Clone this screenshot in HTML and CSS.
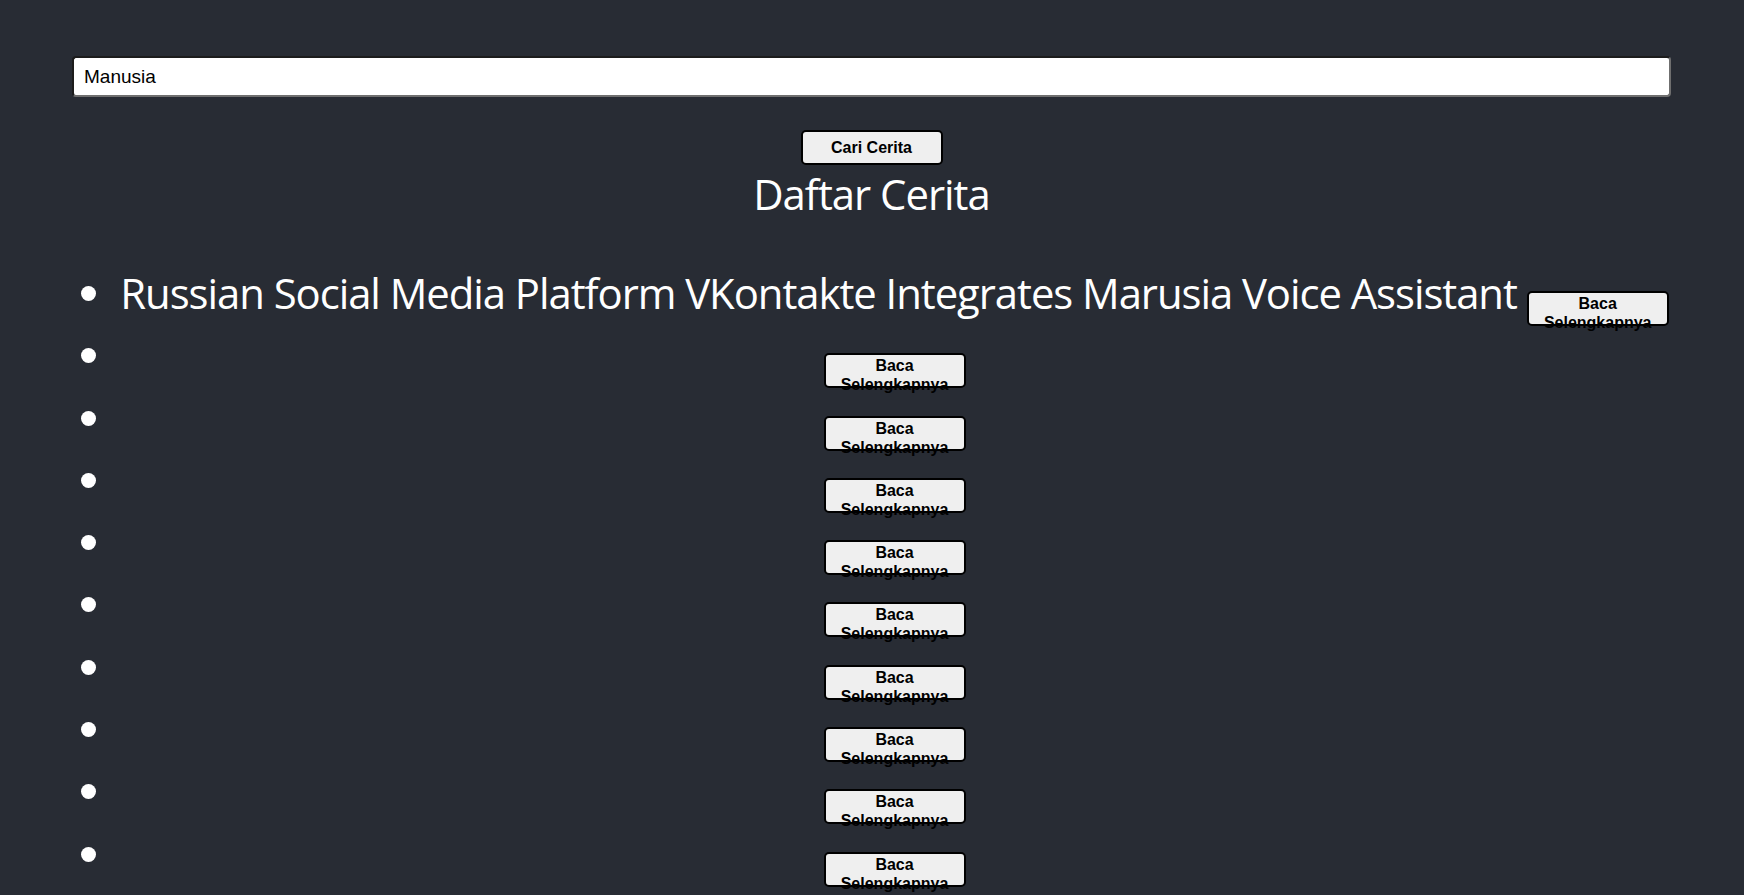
FILE: index.html
```html
<!DOCTYPE html>
<html lang="id">
<head>
<meta charset="utf-8">
<title>Daftar Cerita</title>
<link rel="stylesheet" href="styles.css">
</head>
<body>
<div class="app">
  <input class="search" type="text" value="Manusia">
  <div class="actions"><button class="btn">Cari Cerita</button></div>
  <h2 class="title">Daftar Cerita</h2>
  <ul class="stories">
    <li class="story"><span>Russian Social Media Platform VKontakte Integrates Marusia Voice Assistant</span> <button class="btn">Baca Selengkapnya</button></li>
    <li class="story"><button class="btn">Baca Selengkapnya</button></li>
    <li class="story"><button class="btn">Baca Selengkapnya</button></li>
    <li class="story"><button class="btn">Baca Selengkapnya</button></li>
    <li class="story"><button class="btn">Baca Selengkapnya</button></li>
    <li class="story"><button class="btn">Baca Selengkapnya</button></li>
    <li class="story"><button class="btn">Baca Selengkapnya</button></li>
    <li class="story"><button class="btn">Baca Selengkapnya</button></li>
    <li class="story"><button class="btn">Baca Selengkapnya</button></li>
    <li class="story"><button class="btn">Baca Selengkapnya</button></li>
    <li class="story"><button class="btn">Baca Selengkapnya</button></li>
  </ul>
</div>
</body>
</html>
```
FILE: styles.css
```css
body {
  margin: 0;
  background: #282c34;
  color: #fff;
  font-family: "Open Sans", sans-serif;
}

.app {
  padding: 56px 73px 0 72px;
}

.search {
  display: block;
  width: 100%;
  height: 41px;
  box-sizing: border-box;
  margin: 0;
  padding: 0 10px;
  border: 2px solid;
  border-color: #1c1c1c #6f6f6f #6f6f6f #1c1c1c;
  border-radius: 4px;
  background: #fff;
  color: #000;
  font: 19px "Liberation Sans", Arial, sans-serif;
}

.actions {
  display: flex;
  justify-content: center;
  margin-top: 33px;
}

.btn {
  display: inline-flex;
  flex-direction: column;
  justify-content: safe center;
  align-items: center;
  width: 142px;
  height: 35px;
  box-sizing: border-box;
  margin: 0;
  padding: 1px 6px;
  border: 2px solid #000;
  border-radius: 5px;
  background: #efefef;
  color: #000;
  font: bold 16px/19px "Liberation Sans", Arial, sans-serif;
  letter-spacing: 0;
  text-align: center;
  white-space: normal;
  cursor: pointer;
}

.title {
  margin: 0;
  text-align: center;
  font-size: 41.85px;
  line-height: 58px;
  font-weight: 400;
  letter-spacing: -1px;
}

.stories {
  margin: 41px 0 0;
  padding-left: 46px;
}

.story {
  height: 62.3px;
  font-size: 41.85px;
  letter-spacing: -1.05px;
  text-align: center;
  white-space: nowrap;
}

.story .btn {
  vertical-align: baseline;
}
```
